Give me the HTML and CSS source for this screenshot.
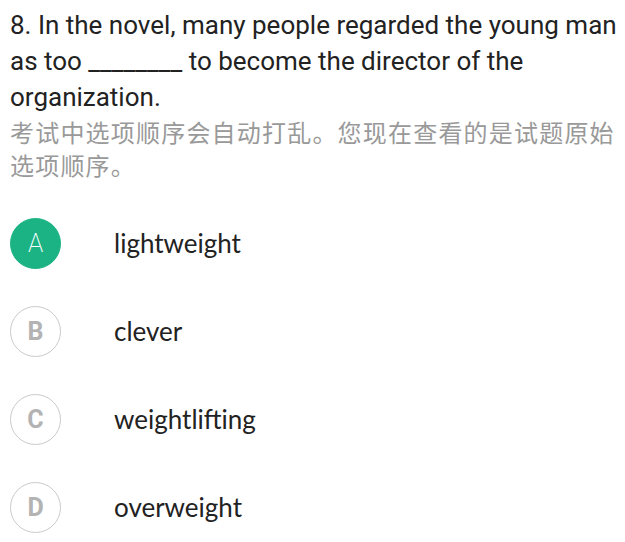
FILE: index.html
```html
<!DOCTYPE html>
<html>
<head>
<meta charset="utf-8">
<link rel="stylesheet" href="styles.css">
</head>
<body>
<div class="page">
  <p class="question">8. In the novel, many people regarded the young man as too ________ to become the director of the organization.</p>
  <p class="note" lang="zh-CN">考试中选项顺序会自动打乱。您现在查看的是试题原始选项顺序。</p>
  <ul class="options">
    <li class="option selected"><span class="badge">A</span><span class="label">lightweight</span></li>
    <li class="option"><span class="badge">B</span><span class="label">clever</span></li>
    <li class="option"><span class="badge">C</span><span class="label">weightlifting</span></li>
    <li class="option"><span class="badge">D</span><span class="label">overweight</span></li>
  </ul>
</div>
</body>
</html>
```
FILE: styles.css
```css
html, body { margin: 0; padding: 0; background: #fff; }
.page { padding: 7px 4px 0 10px; }
.question {
  margin: 0;
  font-family: Roboto, "Noto Sans", sans-serif;
  font-size: 26px;
  line-height: 36px;
  color: #222;
}
.note {
  margin: 0;
  padding-top: 0;
  font-family: "Noto Sans CJK SC", sans-serif;
  font-size: 24px;
  letter-spacing: 1.2px;
  line-height: 33px;
  color: #999;
}
.options { list-style: none; margin: 0; padding: 0; padding-top: 36px; display: flex; flex-direction: column; gap: 36px; }
.option { display: flex; align-items: center; height: 52px; }
.badge {
  width: 49px; height: 49px; border-radius: 50%;
  border: 1.5px solid #cacaca;
  display: flex; align-items: center; justify-content: center;
  font-family: Roboto, sans-serif; font-weight: 700; font-size: 25px; color: #b3b3b3;
  flex: none;
}
.selected .badge { background: #1bb384; border-color: #1bb384; color: #fff; font-weight: 200; }
.label {
  margin-left: 53px;
  font-family: Lato, sans-serif;
  font-size: 26px;
  color: #222;
}
```
